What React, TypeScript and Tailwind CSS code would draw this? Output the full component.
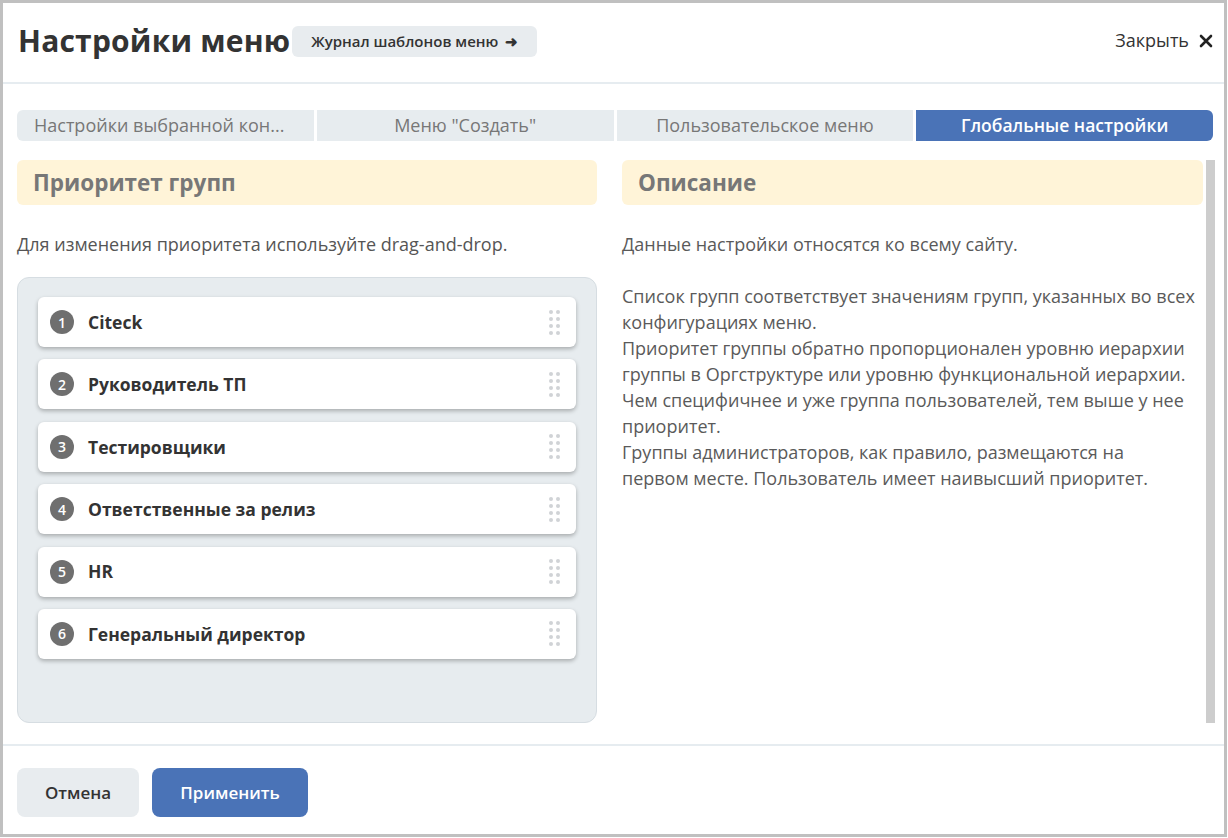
import React from "react";

const items = [
  "Citeck",
  "Руководитель ТП",
  "Тестировщики",
  "Ответственные за релиз",
  "HR",
  "Генеральный директор",
];

function DragDots() {
  return (
    <div className="grid grid-cols-2 gap-x-[3px] gap-y-[3px]">
      {Array.from({ length: 8 }).map((_, i) => (
        <span key={i} className="block w-[4px] h-[4px] rounded-full bg-[#d0d3d6]" />
      ))}
    </div>
  );
}

export default function App() {
  return (
    <div
      className="w-[1228px] h-[838px] bg-white text-[#333]"
      style={{ fontFamily: '"Open Sans", "Noto Sans", sans-serif' }}
    >
      <div className="w-[1227px] h-[837px] border-[3px] border-[#c0c0c0] flex flex-col">
        {/* Header */}
        <div className="h-[81px] shrink-0 flex items-center pl-[15px] pr-[11px] pb-[4px] border-b-2 border-[#e6ecf0]">
          <h1 className="text-[30px] font-bold text-[#333] leading-none tracking-[0.2px]">Настройки меню</h1>
          <button className="ml-[2px] mt-[2px] h-[31px] px-[19px] rounded-md bg-[#e8ecef] text-[15px] font-semibold text-[#333] flex items-center gap-[7px]">
            Журнал шаблонов меню
            <span className="text-[15px] leading-none">➜</span>
          </button>
          <div className="ml-auto flex items-center gap-[10px] text-[18px] text-[#333]">
            <span>Закрыть</span>
            <svg width="14" height="14" viewBox="0 0 14 14" className="mt-[1px]">
              <path d="M2 2 L12 12 M12 2 L2 12" stroke="#222" strokeWidth="2.6" strokeLinecap="round" />
            </svg>
          </div>
        </div>

        {/* Body */}
        <div className="flex-1 flex flex-col pl-[14px] pr-[11px] pt-[26px]">
          {/* Tabs */}
          <div className="grid grid-cols-4 gap-[3px] h-[31px] text-[18px]">
            <div className="bg-[#e7ecef] rounded-l-md flex items-center justify-start pl-[17px] pr-[10px] text-[#777] overflow-hidden">
              <span className="whitespace-nowrap">Настройки выбранной кон...</span>
            </div>
            <div className="bg-[#e7ecef] flex items-center justify-center text-[#777]">Меню "Создать"</div>
            <div className="bg-[#e7ecef] flex items-center justify-center text-[#777]">Пользовательское меню</div>
            <div className="bg-[#4a73b7] rounded-r-md flex items-center justify-center text-white font-semibold text-[17.5px]">
              Глобальные настройки
            </div>
          </div>

          {/* Columns */}
          <div className="mt-[19px] h-[563px] flex gap-[25px]">
            {/* Left */}
            <div className="w-[580px] flex flex-col">
              <div className="h-[45px] rounded-md bg-[#fff4d8] flex items-center pl-[16px] text-[22.5px] font-bold text-[#777]">
                Приоритет групп
              </div>
              <p className="mt-[26px] text-[18px] leading-[26px] text-[#555]">
                Для изменения приоритета используйте drag-and-drop.
              </p>
              <div className="mt-[20px] flex-1 rounded-xl bg-[#e7ecef] border border-[#d6dde2] px-[20px] pt-[19px] flex flex-col gap-[12.4px]">
                {items.map((name, i) => (
                  <div
                    key={name}
                    className="h-[50px] shrink-0 bg-white rounded-md shadow-[0_2px_4px_rgba(0,0,0,0.28)] flex items-center pl-[12px] pr-[16px]"
                  >
                    <span className="w-[24px] h-[24px] rounded-full bg-[#6f6f6f] text-white text-[14px] font-semibold flex items-center justify-center">
                      {i + 1}
                    </span>
                    <span className="ml-[14px] text-[17.5px] font-bold text-[#333]">{name}</span>
                    <div className="ml-auto">
                      <DragDots />
                    </div>
                  </div>
                ))}
              </div>
            </div>

            {/* Right */}
            <div className="flex-1 flex gap-[3px]">
              <div className="flex-1 flex flex-col">
                <div className="h-[45px] rounded-md bg-[#fff4d8] flex items-center pl-[16px] text-[22.5px] font-bold text-[#777]">
                  Описание
                </div>
                <div className="mt-[26px] text-[18px] leading-[26px] text-[#5a5a5a] whitespace-nowrap">
                  <div>Данные настройки относятся ко всему сайту.</div>
                  <div>&nbsp;</div>
                  <div>Список групп соответствует значениям групп, указанных во всех</div>
                  <div>конфигурациях меню.</div>
                  <div>Приоритет группы обратно пропорционален уровню иерархии</div>
                  <div>группы в Оргструктуре или уровню функциональной иерархии.</div>
                  <div>Чем специфичнее и уже группа пользователей, тем выше у нее</div>
                  <div>приоритет.</div>
                  <div>Группы администраторов, как правило, размещаются на</div>
                  <div>первом месте. Пользователь имеет наивысший приоритет.</div>
                </div>
              </div>
              <div className="w-[9px] -mr-[2px] bg-[#cdcdcd]" />
            </div>
          </div>
        </div>

        {/* Footer */}
        <div className="h-[90px] shrink-0 border-t-2 border-[#e6ecf0] pl-[14px] pt-[22px] flex items-start gap-[13px]">
          <button className="h-[49px] w-[122px] rounded-lg bg-[#e8ecef] text-[17px] font-semibold text-[#333]">
            Отмена
          </button>
          <button className="h-[49px] w-[156px] rounded-lg bg-[#4a73b7] text-[17px] font-semibold text-white">
            Применить
          </button>
        </div>
      </div>
    </div>
  );
}
